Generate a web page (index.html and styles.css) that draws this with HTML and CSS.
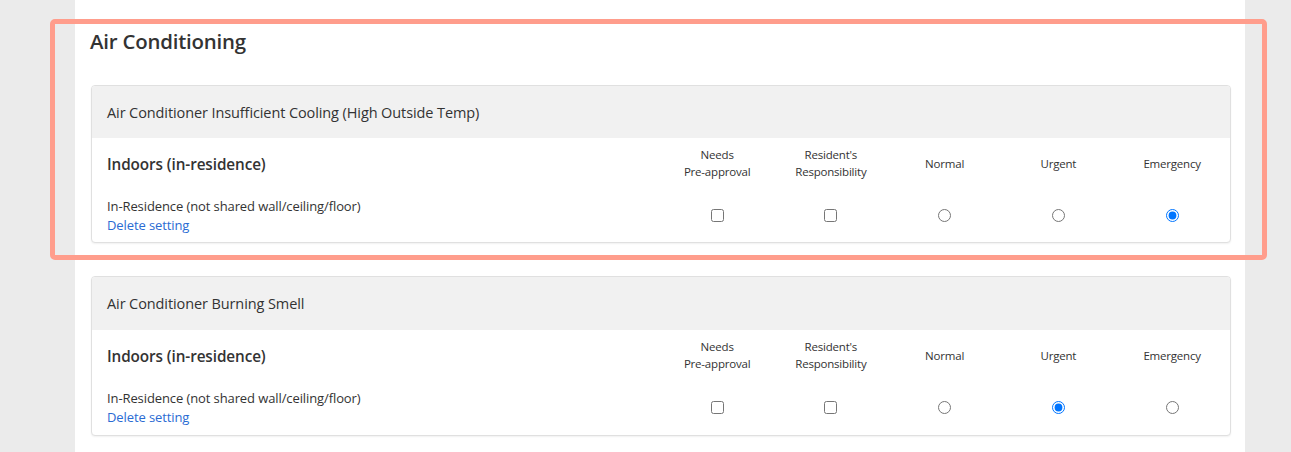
FILE: index.html
```html
<!DOCTYPE html>
<html>
<head>
<meta charset="utf-8">
<link rel="stylesheet" href="styles.css">
</head>
<body>
<div class="panel">
  <h2 class="section-title">Air Conditioning</h2>

  <div class="card">
    <div class="card-header">Air Conditioner Insufficient Cooling (High Outside Temp)</div>
    <div class="card-body">
      <div class="group-label">Indoors (in-residence)</div>
      <div class="col-head">Needs<br>Pre-approval</div>
      <div class="col-head">Resident's<br>Responsibility</div>
      <div class="col-head">Normal</div>
      <div class="col-head">Urgent</div>
      <div class="col-head">Emergency</div>

      <div class="row-label">
        <div>In-Residence (not shared wall/ceiling/floor)</div>
        <a class="del-link" href="#">Delete setting</a>
      </div>
      <div class="cell"><input type="checkbox"></div>
      <div class="cell"><input type="checkbox"></div>
      <div class="cell"><input type="radio" name="p1"></div>
      <div class="cell"><input type="radio" name="p1"></div>
      <div class="cell"><input type="radio" name="p1" checked></div>
    </div>
  </div>

  <div class="card card-tall">
    <div class="card-header">Air Conditioner Burning Smell</div>
    <div class="card-body">
      <div class="group-label">Indoors (in-residence)</div>
      <div class="col-head">Needs<br>Pre-approval</div>
      <div class="col-head">Resident's<br>Responsibility</div>
      <div class="col-head">Normal</div>
      <div class="col-head">Urgent</div>
      <div class="col-head">Emergency</div>

      <div class="row-label">
        <div>In-Residence (not shared wall/ceiling/floor)</div>
        <a class="del-link" href="#">Delete setting</a>
      </div>
      <div class="cell"><input type="checkbox"></div>
      <div class="cell"><input type="checkbox"></div>
      <div class="cell"><input type="radio" name="p2"></div>
      <div class="cell"><input type="radio" name="p2" checked></div>
      <div class="cell"><input type="radio" name="p2"></div>
    </div>
  </div>
</div>
<div class="highlight"></div>
</body>
</html>
```

FILE: styles.css
```css
html, body {
  margin: 0;
  padding: 0;
}
body {
  background: #ebebeb;
  font-family: "Open Sans", "Noto Sans", sans-serif;
  color: #333;
  height: 452px;
  overflow: hidden;
  position: relative;
}
.panel {
  margin-left: 75px;
  width: 1170px;
  background: #fff;
  padding: 25px 15px 40px 15px;
  box-sizing: border-box;
  min-height: 452px;
}
.section-title {
  margin: 0 0 28px 0;
  font-size: 20.4px;
  font-weight: 600;
  line-height: 32px;
  color: #333;
  letter-spacing: -0.2px;
}
.card {
  width: 1138px;
  margin-left: 1px;
  border: 1px solid #e0e0e0;
  border-radius: 4px;
  box-shadow: 0 1px 2px rgba(0,0,0,0.06);
  margin-bottom: 33px;
  overflow: hidden;
  background: #fff;
}
.card-header {
  background: #f1f1f1;
  height: 52px;
  display: flex;
  align-items: center;
  padding-left: 15px;
  font-size: 14.5px;
  letter-spacing: -0.1px;
}
.card-tall .card-header {
  height: 53px;
}
.card-tall .card-body {
  padding-bottom: 9px;
}
.card-body {
  display: grid;
  grid-template-columns: 1fr repeat(5, 113.75px);
  grid-template-rows: 34px 38px;
  row-gap: 16px;
  padding: 8px 1px 8px 15px;
}
.group-label {
  font-size: 15.3px;
  font-weight: 600;
  display: flex;
  align-items: center;
  padding-top: 1px;
  letter-spacing: -0.1px;
}
.col-head {
  font-size: 11.5px;
  line-height: 17px;
  text-align: center;
  display: flex;
  align-items: center;
  justify-content: center;
  letter-spacing: -0.2px;
}
.row-label {
  font-size: 13px;
  line-height: 19px;
  padding-top: 1px;
  letter-spacing: -0.1px;
}
.del-link {
  color: #2a6bd3;
  text-decoration: none;
}
.cell {
  display: flex;
  align-items: center;
  justify-content: center;
}
.cell input {
  margin: 0;
  width: 13px;
  height: 13px;
}
.highlight {
  position: absolute;
  left: 50px;
  top: 19px;
  width: 1217px;
  height: 241px;
  box-sizing: border-box;
  border: 5px solid #ff9d8c;
  border-radius: 5px;
  pointer-events: none;
}
```
